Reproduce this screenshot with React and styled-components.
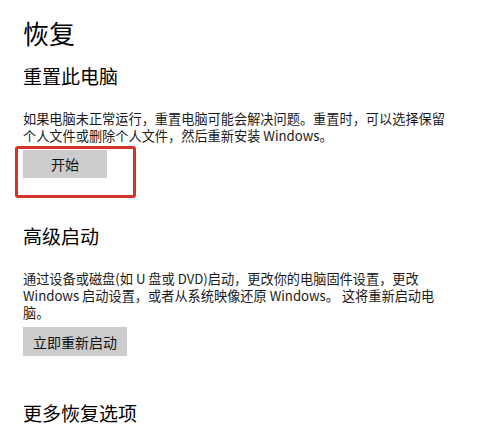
import React from "react";
import styled, { createGlobalStyle } from "styled-components";

const GlobalStyle = createGlobalStyle`
  html, body {
    margin: 0;
    padding: 0;
    background: #ffffff;
  }
  body {
    font-family: "Noto Sans CJK SC", "Noto Sans", sans-serif;
    color: #111111;
  }
`;

// styled-components
const Page = styled.main`
  width: 500px;
  height: 444px;
  overflow: hidden;
  padding: 16px 0 0 23px;
  box-sizing: border-box;
  background: #ffffff;
`;

const Title = styled.h1`
  margin: 0;
  font-size: 26px;
  line-height: 34px;
  font-weight: 400;
  color: #000000;
`;

const Heading = styled.h2`
  margin: ${(props) => props.top || "13px"} 0 0 0;
  font-size: 19px;
  line-height: 26px;
  font-weight: 400;
  color: #000000;
`;

const Text = styled.p`
  margin: 21px 0 0 0;
  font-size: 13.2px;
  line-height: 17px;
  color: #1a1a1a;
  white-space: nowrap;
`;

const ButtonWrap = styled.div`
  position: relative;
  display: inline-block;
  margin-top: 6px;
`;

const Button = styled.button`
  display: flex;
  align-items: center;
  justify-content: center;
  min-width: 84px;
  height: ${(props) => props.height || "28px"};
  padding: 0 10px;
  border: none;
  border-radius: 0;
  background: #cccccc;
  font-family: inherit;
  font-size: 14px;
  color: #111111;
  cursor: pointer;
`;

// red annotation frame laid over the button
const Highlight = styled.span`
  position: absolute;
  left: -8px;
  top: -4px;
  width: 121px;
  height: 52px;
  box-sizing: border-box;
  border: 3px solid #d8322c;
  border-radius: 3px;
  pointer-events: none;
`;

const Section = styled.section`
  display: flex;
  flex-direction: column;
  align-items: flex-start;
`;

function App() {
  return (
    <React.Fragment>
      <GlobalStyle />
      <Page>
        <Title>恢复</Title>

        <Section>
          <Heading>重置此电脑</Heading>
          <Text>
            如果电脑未正常运行，重置电脑可能会解决问题。重置时，可以选择保留
            <br />
            个人文件或删除个人文件，然后重新安装 Windows。
          </Text>
          <ButtonWrap>
            <Button>开始</Button>
            <Highlight />
          </ButtonWrap>
        </Section>

        <Section>
          <Heading top="45px">高级启动</Heading>
          <Text>
            通过设备或磁盘(如 U 盘或 DVD)启动，更改你的电脑固件设置，更改
            <br />
            Windows 启动设置，或者从系统映像还原 Windows。 这将重新启动电
            <br />
            脑。
          </Text>
          <ButtonWrap>
            <Button height="29px">立即重新启动</Button>
          </ButtonWrap>
        </Section>

        <Section>
          <Heading top="44px">更多恢复选项</Heading>
        </Section>
      </Page>
    </React.Fragment>
  );
}

export default App;
